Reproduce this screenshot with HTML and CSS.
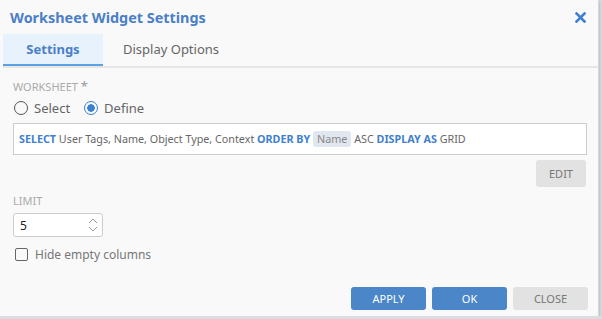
FILE: index.html
```html
<!DOCTYPE html>
<html lang="en">
<head>
  <meta charset="UTF-8">
  <title>Worksheet Widget Settings</title>
  <link rel="stylesheet" href="styles.css">
</head>
<body>
  <div class="dialog">
    <div class="dialog-header">
      <h2 class="dialog-title">Worksheet Widget Settings</h2>
      <span class="close-icon">
        <svg width="11" height="11" viewBox="0 0 11 11">
          <path d="M1.5 1.5 L9.5 9.5 M9.5 1.5 L1.5 9.5" stroke="#3f7fcf" stroke-width="2.6" stroke-linecap="square"/>
        </svg>
      </span>
    </div>

    <div class="tabs">
      <div class="tab active">Settings</div>
      <div class="tab">Display Options</div>
    </div>

    <div class="dialog-body">
      <div class="field-label">Worksheet <span class="required">*</span></div>
      <div class="radios">
        <label class="radio"><span class="radio-dot"></span>Select</label>
        <label class="radio"><span class="radio-dot checked"></span>Define</label>
      </div>

      <div class="query-box">
        <span class="kw">SELECT</span> User Tags, Name, Object Type, Context
        <span class="kw">ORDER BY</span> <span class="tag">Name</span> ASC
        <span class="kw">DISPLAY AS</span> GRID
      </div>
      <div class="edit-row">
        <button class="btn btn-grey btn-edit">EDIT</button>
      </div>

      <div class="field-label limit-label">Limit</div>
      <div class="number-input">
        <span class="number-value">5</span>
        <svg class="spinner" width="12" height="18" viewBox="0 0 12 18">
          <path d="M2 7 L6 3 L10 7 M2 11 L6 15 L10 11" fill="none" stroke="#999" stroke-width="1"/>
        </svg>
      </div>

      <label class="checkbox"><span class="check-box"></span>Hide empty columns</label>
    </div>

    <div class="dialog-footer">
      <button class="btn btn-blue">APPLY</button>
      <button class="btn btn-blue">OK</button>
      <button class="btn btn-grey">CLOSE</button>
    </div>
  </div>
</body>
</html>
```

FILE: styles.css
```css
body {
  margin: 0;
  background-color: #d9dde2;
  font-family: "Noto Sans", "Open Sans", sans-serif;
  font-size: 12px;
  color: #666;
}
.dialog {
  width: 598px;
  height: 316px;
  background-color: #f9f9f9;
  border-right: 1px solid #d8d8d8;
  box-shadow: 0 1px 3px rgba(0, 0, 0, 0.25);
  display: flex;
  flex-direction: column;
}
.dialog-header {
  display: flex;
  align-items: center;
  justify-content: space-between;
  height: 34px;
  padding: 0 10px 0 10px;
}
.dialog-title {
  margin: 0;
  font-size: 14.4px;
  font-weight: 700;
  color: #4a7fc8;
}
.close-icon {
  display: flex;
  margin-right: 2px;
  margin-top: 1px;
}
.tabs {
  display: flex;
  margin: 0 0 0 3px;
  height: 32px;
  border-bottom: 2px solid #e6e6e6;
}
.tab {
  padding: 0 20px;
  line-height: 30px;
  font-size: 13px;
  color: #666;
}
.tab.active {
  width: 60px;
  text-align: center;
  background-color: #e8f2fc;
  color: #4a7fc8;
  font-weight: 700;
  border-bottom: 2px solid #5aa2e2;
}
.dialog-body {
  flex: 1;
  padding: 10px 11px 0 13px;
}
.field-label {
  text-transform: uppercase;
  color: #aaa;
  font-size: 11px;
  line-height: 16px;
}
.required {
  color: #999;
  font-size: 13px;
}
.radios {
  display: flex;
  gap: 13px;
  margin-top: 3px;
  height: 20px;
  align-items: center;
}
.radio {
  display: flex;
  align-items: center;
  gap: 6px;
  font-size: 13px;
  color: #666;
}
.radio-dot {
  width: 12px;
  height: 12px;
  border: 1.5px solid #555;
  border-radius: 50%;
  margin-left: 1px;
  box-sizing: content-box;
}
.radio-dot.checked {
  border-color: #3f7fcf;
  background: radial-gradient(circle, #3f7fcf 0 3.5px, transparent 4px);
}
.query-box {
  margin-top: 5px;
  height: 30px;
  line-height: 30px;
  background-color: #fff;
  border: 1px solid #ccc;
  padding: 0 5px;
  font-size: 10.75px;
  color: #666;
  white-space: nowrap;
}
.kw {
  color: #3f7fcf;
  font-weight: 700;
}
.tag {
  background-color: #e1e7ef;
  color: #888;
  padding: 1px 4px;
  border-radius: 3px;
}
.edit-row {
  display: flex;
  justify-content: flex-end;
  margin-top: 5px;
}
.btn {
  border: none;
  border-radius: 3px;
  font-family: inherit;
  font-size: 11px;
  height: 23px;
  width: 75px;
  padding: 0;
}
.btn-edit {
  width: 50px;
  height: 27px;
  margin-right: 1px;
}
.btn-blue {
  background-color: #4a86c8;
  color: #fff;
}
.btn-grey {
  background-color: #e2e2e2;
  color: #777;
}
.limit-label {
  margin-top: 6px;
}
.number-input {
  margin-top: 4px;
  width: 79px;
  height: 22px;
  border: 1px solid #ccc;
  border-radius: 3px;
  background-color: #fff;
  display: flex;
  align-items: center;
  justify-content: space-between;
  padding: 0 3px 0 6px;
}
.number-value {
  color: #222;
  font-size: 12px;
}
.checkbox {
  display: flex;
  align-items: center;
  gap: 7px;
  margin-top: 9px;
  font-size: 12px;
  color: #777;
}
.check-box {
  width: 11px;
  height: 11px;
  border: 1.5px solid #666;
  border-radius: 2px;
  margin-left: 2px;
}
.dialog-footer {
  display: flex;
  justify-content: flex-end;
  gap: 6px;
  padding: 0 10px 6px 0;
}
```
